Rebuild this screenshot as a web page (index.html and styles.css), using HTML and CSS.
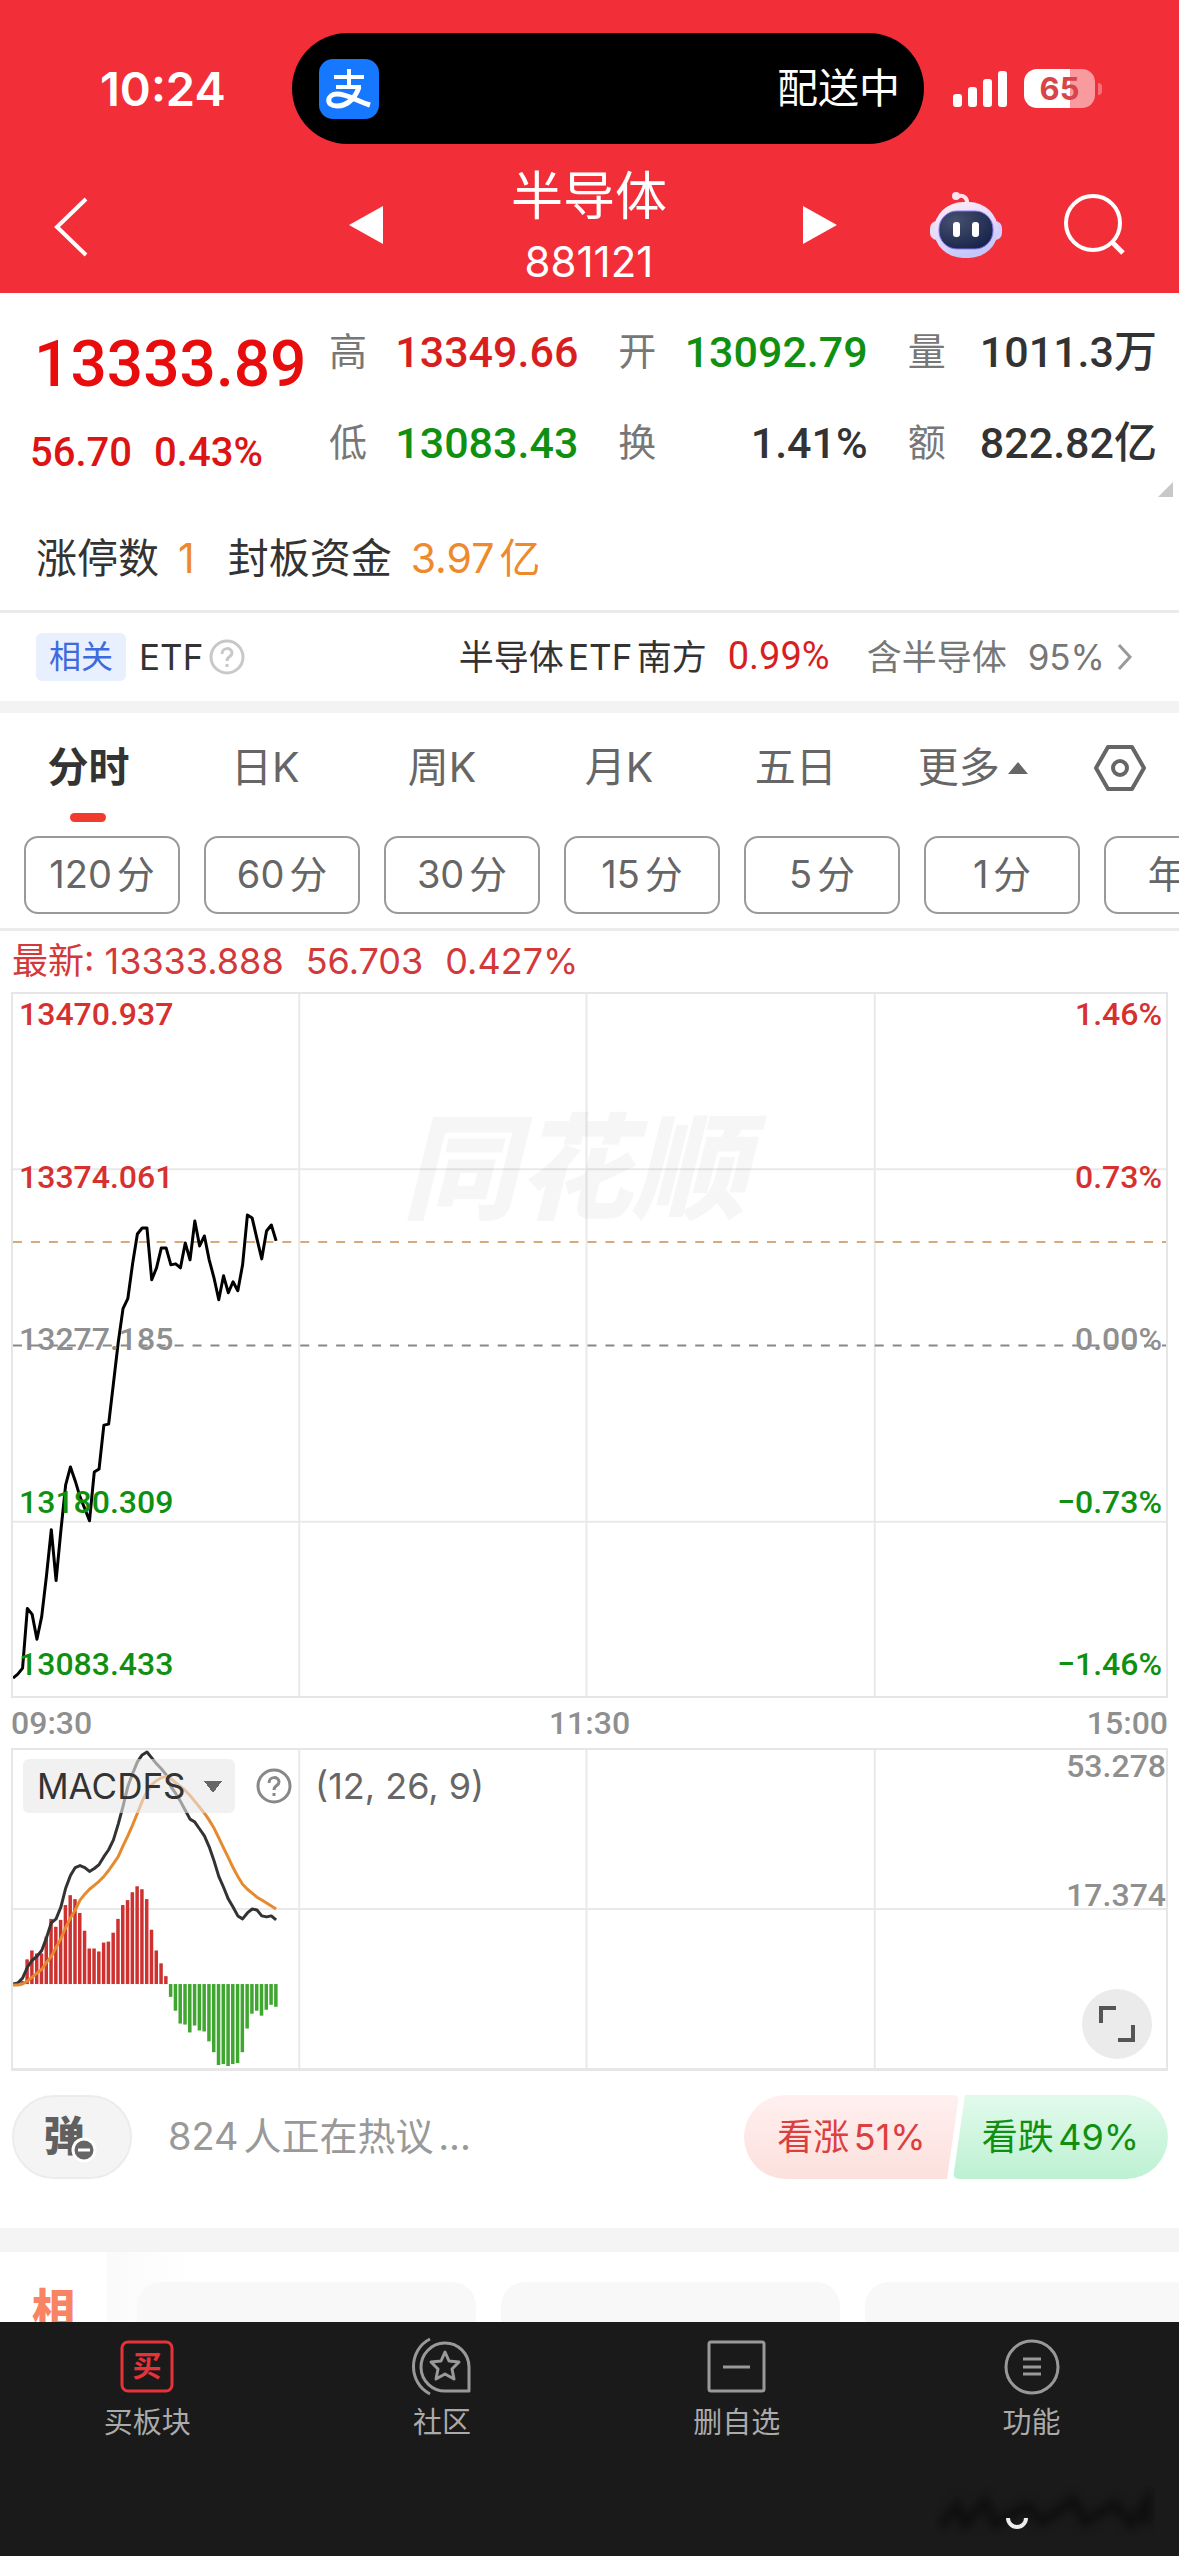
FILE: index.html
```html
<!DOCTYPE html>
<html lang="zh-CN">
<head>
  <meta charset="UTF-8">
  <meta name="viewport" content="width=device-width, initial-scale=1">
  <title>半导体 881121</title>
  <link rel="stylesheet" href="styles.css">
</head>
<body>

<header class="header">
  <div class="status-bar">
    <span class="clock">10:24</span>
    <div class="island">
      <svg class="alipay" viewBox="0 0 60 60">
        <rect width="60" height="60" rx="14" fill="#1677ff"/>
        <g fill="none" stroke="#fff" stroke-width="4">
          <path d="M15 18H45M30 10V28M17 28H42"/>
          <path d="M40 28C37 37 30 47 18 47C6 47 8 35 18 35C28 35 38 42 51 46" stroke-width="5"/>
        </g>
      </svg>
      <span>配送中</span>
    </div>
    <div class="status-icons">
      <svg class="signal" viewBox="0 0 54 36" fill="#fff">
        <rect x="0" y="23" width="9" height="13" rx="3"/>
        <rect x="15" y="16" width="9" height="20" rx="3"/>
        <rect x="30" y="8" width="9" height="28" rx="3"/>
        <rect x="45" y="0" width="9" height="36" rx="3"/>
      </svg>
      <span class="battery">65</span>
      <i class="battery-tip"></i>
    </div>
  </div>

  <nav class="title-bar">
    <button class="icon-btn back" aria-label="返回">
      <svg width="34" height="60" viewBox="0 0 34 60"><path d="M32 2L3 30L32 58" fill="none" stroke="#fff" stroke-width="4"/></svg>
    </button>
    <div class="title-group">
      <button class="icon-btn" aria-label="上一个">
        <svg width="34" height="38" viewBox="0 0 34 38"><path d="M34 0V38L0 19Z" fill="#fff"/></svg>
      </button>
      <div class="title">
        <h1>半导体</h1>
        <p>881121</p>
      </div>
      <button class="icon-btn" aria-label="下一个">
        <svg width="34" height="38" viewBox="0 0 34 38"><path d="M0 0V38L34 19Z" fill="#fff"/></svg>
      </button>
    </div>
    <div class="title-tools">
      <button class="icon-btn" aria-label="智能助手">
        <svg width="72" height="68" viewBox="0 0 72 68">
          <defs>
            <linearGradient id="shell" x1="0" y1="0" x2="0.4" y2="1">
              <stop offset="0" stop-color="#fff0f6"/>
              <stop offset="0.6" stop-color="#e2d8fb"/>
              <stop offset="1" stop-color="#c3c8fa"/>
            </linearGradient>
            <radialGradient id="face" cx="0.3" cy="0.25" r="0.8">
              <stop offset="0" stop-color="#46506f"/>
              <stop offset="1" stop-color="#19264c"/>
            </radialGradient>
          </defs>
          <path d="M37 14C38 7 34 4 28 5" fill="none" stroke="#fbe3ee" stroke-width="4"/>
          <circle cx="26" cy="5" r="4" fill="#fbe3ee"/>
          <rect x="0" y="30" width="16" height="19" rx="7" fill="#e9ddf5"/>
          <rect x="56" y="30" width="16" height="19" rx="7" fill="#d5cdfa"/>
          <rect x="4" y="11" width="64" height="56" rx="29" fill="url(#shell)"/>
          <rect x="9" y="20" width="54" height="38" rx="18" fill="url(#face)" stroke="#8b76ee" stroke-width="1"/>
          <rect x="23" y="31" width="7" height="15" rx="3" fill="#fff"/>
          <rect x="42" y="31" width="7" height="15" rx="3" fill="#fff"/>
        </svg>
      </button>
      <button class="icon-btn" aria-label="搜索">
        <svg width="62" height="62" viewBox="0 0 62 62" fill="none" stroke="#fff" stroke-width="4"><circle cx="29" cy="29" r="27"/><path d="M47 47L59 59" stroke-width="5"/></svg>
      </button>
    </div>
  </nav>
</header>

<section class="quote">
  <div class="price">
    <strong class="last">13333.89</strong>
    <div class="change"><span>56.70</span><span>0.43%</span></div>
  </div>
  <dl class="stats">
    <div><dt>高</dt><dd class="up">13349.66</dd></div>
    <div><dt>开</dt><dd class="down">13092.79</dd></div>
    <div><dt>量</dt><dd>1011.3万</dd></div>
    <div><dt>低</dt><dd class="down">13083.43</dd></div>
    <div><dt>换</dt><dd>1.41%</dd></div>
    <div><dt>额</dt><dd>822.82亿</dd></div>
  </dl>
  <i class="corner"></i>
</section>

<p class="limit-up">
  <span>涨停数</span><b>1</b>
  <span>封板资金</span><b>3.97亿</b>
</p>

<section class="etf">
  <span class="tag">相关</span>
  <span class="etf-name">ETF</span>
  <svg class="help pale" viewBox="0 0 36 36"><circle cx="18" cy="18" r="16"/><path d="M13 15C13 8 23 8 23 14C23 18 18 17 18 22M18 25V28"/></svg>
  <a class="etf-link" href="#">
    <span>半导体ETF南方</span>
    <span class="pct">0.99%</span>
    <span class="share">含半导体</span>
    <span class="share-pct">95%</span>
    <svg width="16" height="28" viewBox="0 0 16 28"><path d="M2 2L13 14L2 26" fill="none" stroke="#999" stroke-width="3"/></svg>
  </a>
</section>

<nav class="tabs">
  <button class="tab active">分时</button>
  <button class="tab">日K</button>
  <button class="tab">周K</button>
  <button class="tab">月K</button>
  <button class="tab">五日</button>
  <button class="tab">更多<i class="caret-up"></i></button>
  <button class="tab" aria-label="设置">
    <svg width="54" height="48" viewBox="0 0 54 48" fill="none" stroke="#666" stroke-width="4" stroke-linejoin="round"><path d="M15 3H39L51 24L39 45H15L3 24Z"/><circle cx="27" cy="24" r="7"/></svg>
  </button>
</nav>

<div class="periods">
  <button>120分</button>
  <button>60分</button>
  <button>30分</button>
  <button>15分</button>
  <button>5分</button>
  <button>1分</button>
  <button>年K</button>
</div>

<p class="latest"><span>最新: 13333.888</span><span>56.703</span><span>0.427%</span></p>

<!-- Minute chart -->
<section class="chart minute">
  <svg class="plot" viewBox="0 0 1156 705" preserveAspectRatio="none">
    <path class="grid" d="M287 0V705M575 0V705M864 0V705M0 176H1156M0 530H1156"/>
    <path class="avg-line" d="M0 249H1156"/>
    <path class="zero-line" d="M0 353H1156"/>
    <polyline id="priceLine" class="price-line"/>
  </svg>
  <span class="watermark">同花顺</span>
  <div class="axis">
    <span class="up">13470.937</span>
    <span class="up">13374.061</span>
    <span>13277.185</span>
    <span class="down">13180.309</span>
    <span class="down">13083.433</span>
  </div>
  <div class="axis right">
    <span class="up">1.46%</span>
    <span class="up">0.73%</span>
    <span>0.00%</span>
    <span class="down">−0.73%</span>
    <span class="down">−1.46%</span>
  </div>
</section>
<div class="times"><span>09:30</span><span>11:30</span><span>15:00</span></div>

<!-- MACD chart -->
<section class="chart macd">
  <svg class="plot" viewBox="0 0 1156 322" preserveAspectRatio="none">
    <path class="grid" d="M287 0V322M575 0V322M864 0V322M0 161H1156"/>
    <g id="macdBars"></g>
    <polyline id="difLine" class="dif-line"/>
    <polyline id="deaLine" class="dea-line"/>
  </svg>
  <div class="indicator">
    <select aria-label="指标"><option>MACDFS</option></select>
    <svg class="help" viewBox="0 0 36 36"><circle cx="18" cy="18" r="16"/><path d="M13 15C13 8 23 8 23 14C23 18 18 17 18 22M18 25V28"/></svg>
    <span>(12, 26, 9)</span>
  </div>
  <div class="macd-axis"><span>53.278</span><span>17.374</span></div>
  <button class="expand" aria-label="全屏">
    <svg width="36" height="36" viewBox="0 0 36 36" fill="none" stroke="#555" stroke-width="4"><path d="M2 17V2H17M34 19V34H19"/></svg>
  </button>
</section>

<section class="discuss">
  <button class="bullet" aria-label="弹幕">
    <span>弹</span>
    <svg width="26" height="26" viewBox="0 0 26 26"><circle cx="13" cy="13" r="11" fill="#666" stroke="#fff" stroke-width="3"/><path d="M7 13H19" stroke="#fff" stroke-width="3"/></svg>
  </button>
  <span class="talk">824人正在热议...</span>
  <div class="vote">
    <button class="bull">看涨51%</button>
    <button class="bear">看跌49%</button>
  </div>
</section>

<section class="related">
  <div class="related-title">相关</div>
  <div class="cards"><div></div><div></div><div></div></div>
</section>

<footer class="bottom-nav">
  <a href="#">
    <svg viewBox="0 0 60 60" fill="none" stroke="#e8323a" stroke-width="3"><rect x="5" y="5" width="50" height="49" rx="6"/><text class="buy-glyph" x="30" y="40">买</text></svg>
    <span>买板块</span>
  </a>
  <a href="#">
    <svg viewBox="0 0 60 60" fill="none" stroke="#999" stroke-width="3" stroke-linejoin="round"><path d="M18 2C-4 13 -4 46 18 57"/><path d="M57 54H34A24 24 0 1 1 57 30Z"/><path d="M33 15L37 24L47 25L40 32L42 42L33 37L24 42L26 32L19 25L29 24Z"/></svg>
    <span>社区</span>
  </a>
  <a href="#">
    <svg viewBox="0 0 60 60" fill="none" stroke="#999" stroke-width="3"><rect x="2" y="5" width="55" height="49" rx="2"/><path d="M16 30H43"/></svg>
    <span>删自选</span>
  </a>
  <a href="#">
    <svg viewBox="0 0 60 60" fill="none" stroke="#999" stroke-width="3"><circle cx="30" cy="30" r="26"/><path d="M21 22H39M21 30H39M21 37H39"/></svg>
    <span>功能</span>
  </a>
  <svg class="smudge" width="220" height="50" viewBox="0 0 220 50">
    <path class="smear" d="M6 40L22 20L30 38L50 16L60 38L92 20L108 36L138 14L150 36L180 18L196 38L212 16V38"/>
    <path d="M73 32A9 9 0 0 0 91 32" fill="none" stroke="#eee" stroke-width="4"/>
  </svg>
</footer>

<script src="chart.js"></script>
</body>
</html>
```
FILE: styles.css
```css
* {
  box-sizing: border-box;
}

body {
  margin: 0;
  min-height: 100vh;
  display: flex;
  flex-direction: column;
  background: #fff;
  color: #333;
  font-family: Inter, "Noto Sans CJK SC", sans-serif;
  font-size: 35px;
  line-height: 1.4;
  text-autospace: normal;
  overflow-x: hidden;
}

button, select {
  font: inherit;
  color: inherit;
  border: 0;
  padding: 0;
  margin: 0;
  background: none;
}

h1, p, dl, dd {
  margin: 0;
}

a {
  color: inherit;
  text-decoration: none;
}

svg {
  display: block;
  flex: none;
}

.up { color: #d81e1e; }
.down { color: #109010; }

/* header */
.header {
  height: 293px;
  background: #f22f38;
  color: #fff;
}

.status-bar {
  display: grid;
  grid-template-columns: 292px 1fr 255px;
  align-items: center;
  height: 144px;
  padding-top: 33px;
}

.clock {
  padding-left: 100px;
  font-size: 47px;
  font-weight: 600;
}

.island {
  display: flex;
  align-items: center;
  justify-content: space-between;
  height: 111px;
  padding: 0 24px 0 27px;
  border-radius: 56px;
  background: #000;
  font-size: 41px;
}

.alipay {
  width: 60px;
  height: 60px;
}

.status-icons {
  display: flex;
  align-items: center;
  padding-left: 29px;
}

.signal {
  width: 54px;
  height: 36px;
  margin-right: 17px;
}

.battery {
  width: 71px;
  height: 39px;
  border-radius: 13px;
  background: linear-gradient(90deg, #fff 65%, #f99a9e 65%);
  color: #d9434a;
  font-size: 31px;
  font-weight: 700;
  line-height: 39px;
  text-align: center;
}

.battery-tip {
  width: 4px;
  height: 12px;
  margin-left: 3px;
  border-radius: 0 4px 4px 0;
  background: #f67077;
}

.title-bar {
  display: grid;
  grid-template-columns: 295px 488px 1fr;
  height: 149px;
  padding: 0 53px 0 54px;
}

.icon-btn {
  display: flex;
}

.back {
  align-self: center;
  padding-top: 16px;
}

.title-group {
  display: flex;
  justify-content: space-between;
  align-items: center;
}

.title-group .icon-btn {
  padding-top: 12px;
}

.title {
  padding: 10px 8px 0 0;
  text-align: center;
}

.title h1 {
  font-size: 52px;
  font-weight: 400;
  line-height: 76px;
}

.title p {
  font-size: 42px;
  line-height: 54px;
}

.title-tools {
  display: flex;
  align-items: center;
  justify-content: flex-end;
  gap: 62px;
  padding-top: 12px;
}

/* quote */
.quote {
  position: relative;
  display: flex;
  height: 204px;
  padding: 14px 22px 0 30px;
  font-family: Roboto, "Noto Sans CJK SC", sans-serif;
  font-weight: 500;
  text-autospace: no-autospace;
}

.price {
  width: 299px;
  color: #dc1414;
}

.last {
  display: block;
  padding: 12px 0 0 4px;
  color: #e80c0c;
  font-size: 64px;
  font-weight: 500;
  line-height: 92px;
}

.change {
  display: flex;
  gap: 22px;
  font-size: 40px;
  line-height: 84px;
}

.stats {
  flex: 1;
  display: grid;
  grid-template-columns: repeat(3, 1fr);
  grid-auto-rows: 91px;
  column-gap: 40px;
}

.stats div {
  display: flex;
  justify-content: space-between;
  align-items: center;
  white-space: nowrap;
}

.stats dt {
  color: #777;
  font-size: 38px;
  font-weight: 400;
}

.stats dd {
  font-size: 43px;
}

.corner {
  position: absolute;
  right: 6px;
  bottom: 0;
  border-bottom: 15px solid #c8c8c8;
  border-left: 15px solid transparent;
}

.limit-up {
  display: flex;
  height: 116px;
  padding: 4px 36px 0;
  border-bottom: 3px solid #ebebeb;
  font-size: 41px;
  line-height: 114px;
}

.limit-up b {
  margin: 0 33px 0 19px;
  color: #ee8a2e;
  font-weight: 400;
}

/* etf */
.etf {
  display: flex;
  align-items: center;
  height: 100px;
  padding: 0 46px 0 36px;
  border-bottom: 12px solid #f3f3f3;
}

.tag {
  width: 90px;
  margin-right: 13px;
  border-radius: 6px;
  background: #e8effd;
  color: #3e6ae0;
  font-size: 32px;
  line-height: 48px;
  text-align: center;
}

.etf-name {
  margin-right: 6px;
}

.help {
  width: 36px;
  height: 36px;
  fill: none;
  stroke: #888;
  stroke-width: 3;
}

.help.pale {
  stroke: #c8c8c8;
}

.etf-link {
  display: flex;
  align-items: center;
  margin-left: auto;
}

.pct {
  margin: 0 37px 0 21px;
  color: #d81e1e;
  font-family: Roboto, sans-serif;
  font-size: 38px;
}

.share {
  margin-right: 21px;
}

.share, .share-pct {
  color: #777;
}

.share-pct {
  margin-right: 12px;
}

/* tabs */
.tabs {
  display: grid;
  grid-template-columns: repeat(6, 3fr) 2fr;
  height: 110px;
  color: #666;
  font-size: 41px;
  text-autospace: no-autospace;
}

.tab {
  display: flex;
  align-items: center;
  justify-content: center;
}

.active {
  position: relative;
  color: #333;
  font-weight: 700;
}

.active::after {
  content: "";
  position: absolute;
  bottom: 1px;
  left: 50%;
  width: 36px;
  height: 9px;
  margin-left: -18px;
  border-radius: 5px;
  background: #f13b2f;
}

.caret-up {
  margin-left: 8px;
  border: 10px solid transparent;
  border-top: 0;
  border-bottom: 12px solid #666;
}

.periods {
  display: flex;
  gap: 24px;
  height: 108px;
  padding: 13px 0 0 24px;
  border-bottom: 3px solid #ebebeb;
  overflow: hidden;
}

.periods button {
  flex: none;
  width: 156px;
  height: 78px;
  border: 2px solid #999;
  border-radius: 14px;
  color: #666;
  font-size: 38px;
}

.latest {
  display: flex;
  gap: 22px;
  padding-left: 12px;
  color: #d3393b;
  font-size: 36px;
  line-height: 61px;
  text-autospace: no-autospace;
}

/* charts */
.chart {
  position: relative;
  margin: 0 11px;
  border: 2px solid #e6e6e6;
  font-family: Roboto, "Noto Sans CJK SC", sans-serif;
}

.minute {
  height: 706px;
}

.macd {
  height: 323px;
  border-bottom-width: 3px;
}

.plot {
  width: 100%;
  height: 100%;
  fill: none;
}

.grid {
  stroke: #e9e9e9;
  stroke-width: 2;
}

.avg-line {
  stroke: #d6ab7c;
  stroke-width: 2;
  stroke-dasharray: 9 9;
}

.zero-line {
  stroke: #888;
  stroke-width: 2;
  stroke-dasharray: 9 9;
}

.price-line, .dif-line, .dea-line {
  stroke: #000;
  stroke-width: 3;
  stroke-linejoin: round;
}

.dif-line { stroke: #333; }
.dea-line { stroke: #e68a30; }
.bar-up { fill: #cd3230; }
.bar-down { fill: #3fa62f; }

.watermark {
  position: absolute;
  top: 102px;
  left: 0;
  right: 0;
  padding-right: 30px;
  color: rgba(0, 0, 0, 0.035);
  font-size: 115px;
  font-style: italic;
  font-weight: 900;
  line-height: 150px;
  text-align: center;
}

.axis {
  position: absolute;
  top: 0;
  bottom: 12px;
  left: 6px;
  display: flex;
  flex-direction: column;
  justify-content: space-between;
  color: #8f8f8f;
  font-size: 32px;
  font-weight: 500;
  line-height: 40px;
}

.axis .up {
  color: #d6302f;
}

.axis.right {
  left: auto;
  right: 4px;
  text-align: right;
}

.times {
  display: flex;
  justify-content: space-between;
  margin: 0 11px;
  color: #8f8f8f;
  font-family: Roboto, sans-serif;
  font-size: 32px;
  font-weight: 500;
  line-height: 50px;
}

.indicator {
  position: absolute;
  top: 9px;
  left: 10px;
  display: flex;
  align-items: center;
  color: #666;
  font-family: Inter, sans-serif;
}

.indicator select {
  width: 212px;
  height: 54px;
  margin-right: 21px;
  padding-left: 14px;
  border-radius: 6px;
  appearance: none;
  background:
    linear-gradient(to bottom right, #666 50%, transparent 50%) 190px 22px / 9px 12px no-repeat,
    linear-gradient(to bottom left, #666 50%, transparent 50%) 181px 22px / 9px 12px no-repeat,
    rgba(232, 232, 232, 0.6);
  color: #333;
}

.indicator span {
  margin-left: 23px;
  font-size: 36px;
}

.macd-axis {
  position: absolute;
  top: -4px;
  right: 0;
  display: flex;
  flex-direction: column;
  gap: 89px;
  color: #8f8f8f;
  font-size: 32px;
  font-weight: 500;
  line-height: 40px;
}

.expand {
  position: absolute;
  right: 14px;
  bottom: 9px;
  display: flex;
  align-items: center;
  justify-content: center;
  width: 70px;
  height: 70px;
  border-radius: 50%;
  background: #ebebeb;
}

/* discussion */
.discuss {
  display: flex;
  align-items: center;
  height: 181px;
  padding: 0 11px 25px 12px;
  border-bottom: 24px solid #f4f4f4;
}

.bullet {
  position: relative;
  width: 120px;
  height: 84px;
  margin-right: 36px;
  border: 2px solid #ececec;
  border-radius: 42px;
  background: #f4f4f4;
  color: #606060;
  font-size: 41px;
  font-weight: 900;
}

.bullet span {
  display: block;
  padding-right: 16px;
}

.bullet svg {
  position: absolute;
  left: 57px;
  top: 40px;
}

.talk {
  color: #999;
  font-size: 38px;
}

.vote {
  display: flex;
  margin-left: auto;
}

.vote button {
  width: 215px;
  height: 84px;
  font-size: 36px;
}

.bull {
  border-radius: 42px 6px 6px 42px;
  background: linear-gradient(#fff0ef, #fce0dd);
  clip-path: polygon(0 0, 100% 0, 203px 100%, 0 100%);
}

.bear {
  margin-left: -6px;
  border-radius: 6px 42px 42px 6px;
  background: linear-gradient(#e2faec, #bdf1d2);
  clip-path: polygon(12px 0, 100% 0, 100% 100%, 0 100%);
}

.vote .bull { color: #dc3f3f; }
.vote .bear { color: #109010; }

/* related */
.related {
  display: flex;
  height: 70px;
  overflow: hidden;
}

.related-title {
  width: 108px;
  padding: 29px 32px 0;
  color: #f88464;
  font-size: 43px;
  font-weight: 900;
  line-height: 56px;
}

.cards {
  flex: 1;
  display: flex;
  gap: 25px;
  padding: 30px 0 0 30px;
  background: linear-gradient(90deg, #fafafa, #fff 90px);
}

.cards div {
  flex: none;
  width: 339px;
  height: 100px;
  border-radius: 24px;
  background: #f8f8f8;
}

/* bottom navigation */
.bottom-nav {
  position: relative;
  flex: 1;
  display: grid;
  grid-template-columns: repeat(4, 1fr);
  min-height: 234px;
  background: #1a1a1a;
  color: #aaa;
  font-size: 29px;
}

.bottom-nav a {
  display: flex;
  flex-direction: column;
  align-items: center;
  gap: 6px;
  padding-top: 15px;
}

.bottom-nav a svg {
  width: 60px;
  height: 60px;
}

.buy-glyph {
  fill: #e8323a;
  stroke: none;
  font-size: 29px;
  font-weight: 700;
  text-anchor: middle;
}

.smudge {
  position: absolute;
  right: 24px;
  bottom: 20px;
}

.smear {
  fill: none;
  stroke: #0f0f0f;
  stroke-width: 10;
  filter: blur(4px);
}
```
FILE: chart.js
```js
// One sample per minute, 240 minutes across the plot
const STEP = 1156 / 241;

const price = [687, 683, 677, 617, 623, 648, 625, 584, 538, 589, 539, 493, 475, 489, 505, 517, 529, 480, 477, 433, 432, 391, 350, 316, 306, 271, 241, 235, 235, 287, 275, 255, 255, 272, 271, 275, 250, 267, 228, 253, 243, 267, 285, 307, 283, 300, 289, 298, 272, 222, 225, 246, 266, 238, 232, 248];

const dif = [237, 236, 231, 220, 213, 209, 203, 190, 175, 171, 159, 140, 127, 119, 117, 119, 123, 120, 116, 108, 101, 91, 75, 57, 37, 24, 12, 5, 2, 8, 14, 19, 25, 37, 44, 52, 61, 70, 73, 80, 87, 98, 112, 128, 139, 151, 159, 168, 171, 165, 161, 162, 168, 169, 168, 172];

const dea = [238, 238, 237, 234, 230, 226, 222, 215, 209, 200, 191, 180, 170, 162, 152, 146, 141, 137, 133, 128, 122, 115, 108, 97, 87, 76, 64, 52, 42, 35, 31, 28, 27, 29, 33, 37, 41, 46, 52, 58, 64, 71, 79, 89, 99, 109, 119, 128, 136, 141, 145, 149, 152, 155, 158, 161];

const macd = [0, 1, 3, 25, 34, 31, 31, 48, 66, 58, 65, 80, 90, 86, 72, 54, 36, 36, 33, 42, 43, 52, 66, 80, 85, 93, 99, 96, 86, 55, 34, 21, 8, -13, -27, -40, -41, -49, -42, -47, -48, -58, -69, -82, -81, -83, -81, -80, -69, -45, -30, -27, -32, -26, -21, -23];

function drawLine(id, values) {
  const points = values.map((y, i) => (i * STEP).toFixed(1) + ',' + y);
  document.getElementById(id).setAttribute('points', points.join(' '));
}

function drawBars(values) {
  const zero = 237;
  const group = document.getElementById('macdBars');
  values.forEach((v, i) => {
    const bar = document.createElementNS('http://www.w3.org/2000/svg', 'rect');
    bar.setAttribute('class', v < 0 ? 'bar-down' : 'bar-up');
    bar.setAttribute('x', (i * STEP - 2).toFixed(1));
    bar.setAttribute('y', v < 0 ? zero : zero - v);
    bar.setAttribute('width', 3.5);
    bar.setAttribute('height', Math.abs(v));
    group.appendChild(bar);
  });
}

drawLine('priceLine', price);
drawLine('difLine', dif);
drawLine('deaLine', dea);
drawBars(macd);
```
